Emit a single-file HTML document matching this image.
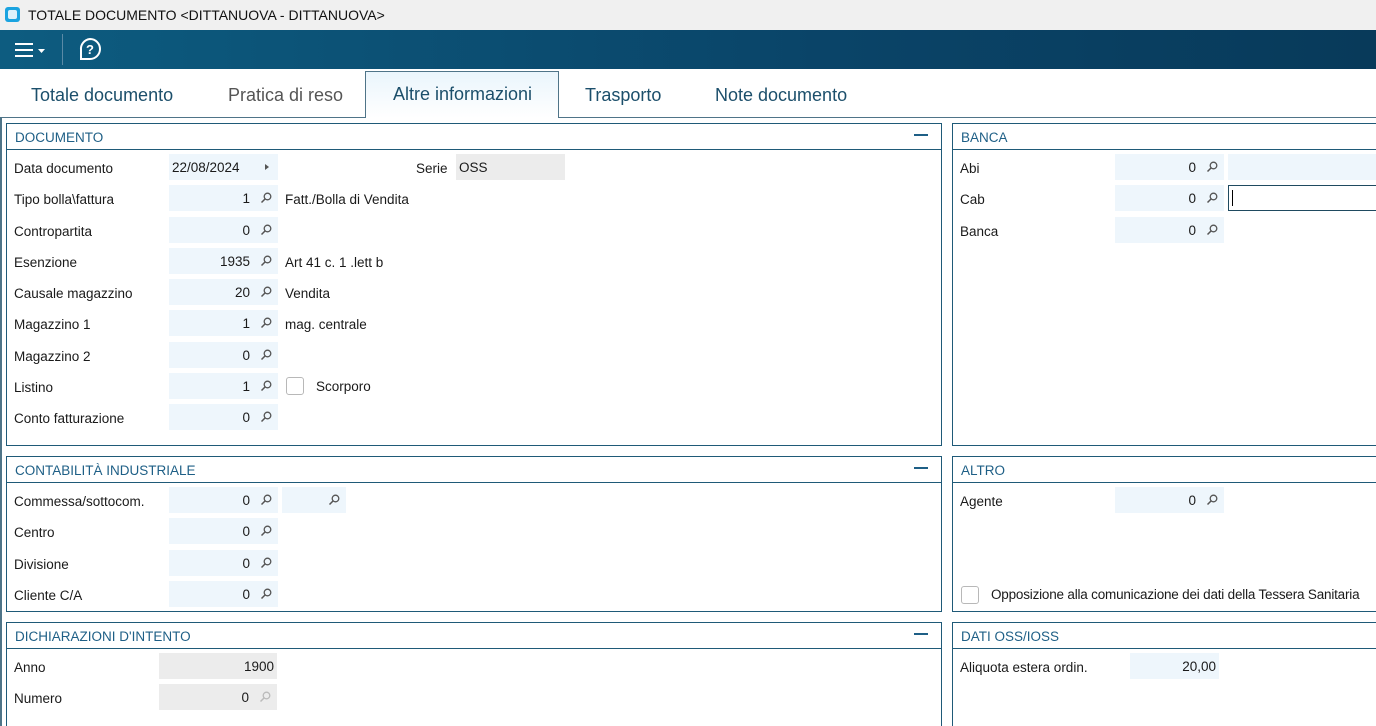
<!DOCTYPE html>
<html style="overflow:hidden;width:1376px;height:726px"><head><meta charset="utf-8"><style>
*{box-sizing:border-box;margin:0;padding:0}
body{width:1376px;height:726px;overflow:hidden;background:#fff;font-family:"Liberation Sans",sans-serif;font-size:13.5px;color:#1a1a1a;position:relative}
.a{position:absolute}
.title{left:0;top:0;width:1376px;height:30px;background:#f0f0f0}
.tb{left:0;top:30px;width:1376px;height:39px;background:linear-gradient(90deg,#0d5c80,#0a4468 60%,#083a5a)}
.tab{top:85px;font-size:18px;color:#1c4f6b}
.panel{border:1px solid #1f5a78;background:#fff}
.ph{position:absolute;left:0;top:0;right:0;height:26px;border-bottom:1px solid #1f5a78;color:#1e5f86;font-size:13.5px;padding:6px 0 0 8px}
.min{position:absolute;top:10px;width:14px;height:1.5px;background:#1e5f86}
.lb{position:absolute;font-size:13.5px;white-space:nowrap}
.in{position:absolute;height:26px;background:#eef6fc;text-align:right;padding:6px 28px 0 0;font-size:13.5px}
.gr{background:#ececec}
.mg{position:absolute;right:6px;top:7px;width:12px;height:12px}
.cb{position:absolute;width:18px;height:18px;border:1px solid #b8b8b8;border-radius:3px;background:#fff}
</style></head><body>
<div class="a title">
 <div class="a" style="left:5px;top:7px;width:15px;height:15px;background:#1aa3e0;border-radius:3px"><div class="a" style="left:3px;top:3px;width:9px;height:9px;background:#fff;border-radius:2px;opacity:.85"></div></div>
 <div class="a" style="left:28px;top:7px;font-size:14px;color:#111">TOTALE DOCUMENTO &lt;DITTANUOVA - DITTANUOVA&gt;</div>
</div>
<div class="a tb">
 <svg class="a" style="left:14px;top:11px" width="36" height="18"><g stroke="#fff" stroke-width="2"><line x1="1" y1="3" x2="19" y2="3"/><line x1="1" y1="9" x2="19" y2="9"/><line x1="1" y1="15" x2="19" y2="15"/></g><path d="M24 8h7l-3.5 4z" fill="#fff"/></svg>
 <div class="a" style="left:62px;top:4px;width:1px;height:31px;background:#5a8aa6"></div>
 <svg class="a" style="left:78px;top:7px" width="26" height="26"><path d="M12 2a10 10 0 1 1 0 20H3v-9A10 10 0 0 1 12 2z" fill="none" stroke="#fff" stroke-width="2"/><text x="12" y="17" font-family="Liberation Sans" font-size="13" font-weight="bold" fill="#fff" text-anchor="middle">?</text></svg>
</div>
<div class="a" style="left:0;top:117px;width:1376px;height:1px;background:#4f7488"></div>
<div class="a" style="left:365px;top:71px;width:194px;height:47px;border:1px solid #4f7488;border-bottom:none;background:linear-gradient(#eaf5fc,#fff)"></div>
<div class="a tab" style="left:31px">Totale documento</div>
<div class="a tab" style="left:228px;color:#555">Pratica di reso</div>
<div class="a tab" style="left:393px;top:84px">Altre informazioni</div>
<div class="a tab" style="left:585px">Trasporto</div>
<div class="a tab" style="left:715px">Note documento</div>
<div class="a" style="left:0;top:117px;width:2px;height:609px;background:#4f7488"></div>

<div class="a panel" style="left:6px;top:123px;width:936px;height:323px"><div class="ph">DOCUMENTO</div><div class="min" style="left:907px"></div></div>
<div class="lb" style="left:14px;top:161px">Data documento</div>
<div class="in" style="left:169px;top:154px;width:109px;text-align:left;padding-left:3px">22/08/2024<svg class="mg" viewBox="0 0 12 12"><path d="M5 3l4 3-4 3z" fill="#555"/></svg></div>
<div class="lb" style="left:416px;top:161px">Serie</div>
<div class="in gr" style="left:456px;top:154px;width:109px;text-align:left;padding-left:3px">OSS</div>

<div class="lb" style="left:14px;top:192px">Tipo bolla\fattura</div>
<div class="in" style="left:169px;top:185px;width:109px">1<svg class="mg"><circle cx="7.5" cy="4.5" r="3.3" fill="none" stroke="#555" stroke-width="1.3"/><line x1="5" y1="7" x2="1.5" y2="10.5" stroke="#555" stroke-width="1.5"/></svg></div>
<div class="lb" style="left:285px;top:192px">Fatt./Bolla di Vendita</div>

<div class="lb" style="left:14px;top:224px">Contropartita</div>
<div class="in" style="left:169px;top:217px;width:109px">0<svg class="mg"><circle cx="7.5" cy="4.5" r="3.3" fill="none" stroke="#555" stroke-width="1.3"/><line x1="5" y1="7" x2="1.5" y2="10.5" stroke="#555" stroke-width="1.5"/></svg></div>

<div class="lb" style="left:14px;top:255px">Esenzione</div>
<div class="in" style="left:169px;top:248px;width:109px">1935<svg class="mg"><circle cx="7.5" cy="4.5" r="3.3" fill="none" stroke="#555" stroke-width="1.3"/><line x1="5" y1="7" x2="1.5" y2="10.5" stroke="#555" stroke-width="1.5"/></svg></div>
<div class="lb" style="left:285px;top:255px">Art 41 c. 1 .lett b</div>

<div class="lb" style="left:14px;top:286px">Causale magazzino</div>
<div class="in" style="left:169px;top:279px;width:109px">20<svg class="mg"><circle cx="7.5" cy="4.5" r="3.3" fill="none" stroke="#555" stroke-width="1.3"/><line x1="5" y1="7" x2="1.5" y2="10.5" stroke="#555" stroke-width="1.5"/></svg></div>
<div class="lb" style="left:285px;top:286px">Vendita</div>

<div class="lb" style="left:14px;top:317px">Magazzino 1</div>
<div class="in" style="left:169px;top:310px;width:109px">1<svg class="mg"><circle cx="7.5" cy="4.5" r="3.3" fill="none" stroke="#555" stroke-width="1.3"/><line x1="5" y1="7" x2="1.5" y2="10.5" stroke="#555" stroke-width="1.5"/></svg></div>
<div class="lb" style="left:285px;top:317px">mag. centrale</div>

<div class="lb" style="left:14px;top:349px">Magazzino 2</div>
<div class="in" style="left:169px;top:342px;width:109px">0<svg class="mg"><circle cx="7.5" cy="4.5" r="3.3" fill="none" stroke="#555" stroke-width="1.3"/><line x1="5" y1="7" x2="1.5" y2="10.5" stroke="#555" stroke-width="1.5"/></svg></div>

<div class="lb" style="left:14px;top:380px">Listino</div>
<div class="in" style="left:169px;top:373px;width:109px">1<svg class="mg"><circle cx="7.5" cy="4.5" r="3.3" fill="none" stroke="#555" stroke-width="1.3"/><line x1="5" y1="7" x2="1.5" y2="10.5" stroke="#555" stroke-width="1.5"/></svg></div>
<div class="cb" style="left:286px;top:377px"></div>
<div class="lb" style="left:316px;top:379px">Scorporo</div>

<div class="lb" style="left:14px;top:411px">Conto fatturazione</div>
<div class="in" style="left:169px;top:404px;width:109px">0<svg class="mg"><circle cx="7.5" cy="4.5" r="3.3" fill="none" stroke="#555" stroke-width="1.3"/><line x1="5" y1="7" x2="1.5" y2="10.5" stroke="#555" stroke-width="1.5"/></svg></div>

<div class="a panel" style="left:952px;top:123px;width:440px;height:323px"><div class="ph">BANCA</div></div>
<div class="lb" style="left:960px;top:161px">Abi</div>
<div class="in" style="left:1115px;top:154px;width:109px">0<svg class="mg"><circle cx="7.5" cy="4.5" r="3.3" fill="none" stroke="#555" stroke-width="1.3"/><line x1="5" y1="7" x2="1.5" y2="10.5" stroke="#555" stroke-width="1.5"/></svg></div>
<div class="in" style="left:1228px;top:154px;width:148px"></div>
<div class="lb" style="left:960px;top:192px">Cab</div>
<div class="in" style="left:1115px;top:185px;width:109px">0<svg class="mg"><circle cx="7.5" cy="4.5" r="3.3" fill="none" stroke="#555" stroke-width="1.3"/><line x1="5" y1="7" x2="1.5" y2="10.5" stroke="#555" stroke-width="1.5"/></svg></div>
<div class="a" style="left:1228px;top:185px;width:150px;height:26px;border:1px solid #1f4a60;background:#fff"><div class="a" style="left:3px;top:4px;width:1px;height:16px;background:#000"></div></div>
<div class="lb" style="left:960px;top:224px">Banca</div>
<div class="in" style="left:1115px;top:217px;width:109px">0<svg class="mg"><circle cx="7.5" cy="4.5" r="3.3" fill="none" stroke="#555" stroke-width="1.3"/><line x1="5" y1="7" x2="1.5" y2="10.5" stroke="#555" stroke-width="1.5"/></svg></div>

<div class="a panel" style="left:6px;top:456px;width:936px;height:156px"><div class="ph">CONTABILITÀ INDUSTRIALE</div><div class="min" style="left:907px"></div></div>
<div class="lb" style="left:14px;top:494px">Commessa/sottocom.</div>
<div class="in" style="left:169px;top:487px;width:109px">0<svg class="mg"><circle cx="7.5" cy="4.5" r="3.3" fill="none" stroke="#555" stroke-width="1.3"/><line x1="5" y1="7" x2="1.5" y2="10.5" stroke="#555" stroke-width="1.5"/></svg></div>
<div class="in" style="left:282px;top:487px;width:64px"><svg class="mg"><circle cx="7.5" cy="4.5" r="3.3" fill="none" stroke="#555" stroke-width="1.3"/><line x1="5" y1="7" x2="1.5" y2="10.5" stroke="#555" stroke-width="1.5"/></svg></div>
<div class="lb" style="left:14px;top:525px">Centro</div>
<div class="in" style="left:169px;top:518px;width:109px">0<svg class="mg"><circle cx="7.5" cy="4.5" r="3.3" fill="none" stroke="#555" stroke-width="1.3"/><line x1="5" y1="7" x2="1.5" y2="10.5" stroke="#555" stroke-width="1.5"/></svg></div>
<div class="lb" style="left:14px;top:557px">Divisione</div>
<div class="in" style="left:169px;top:550px;width:109px">0<svg class="mg"><circle cx="7.5" cy="4.5" r="3.3" fill="none" stroke="#555" stroke-width="1.3"/><line x1="5" y1="7" x2="1.5" y2="10.5" stroke="#555" stroke-width="1.5"/></svg></div>
<div class="lb" style="left:14px;top:588px">Cliente C/A</div>
<div class="in" style="left:169px;top:581px;width:109px">0<svg class="mg"><circle cx="7.5" cy="4.5" r="3.3" fill="none" stroke="#555" stroke-width="1.3"/><line x1="5" y1="7" x2="1.5" y2="10.5" stroke="#555" stroke-width="1.5"/></svg></div>

<div class="a panel" style="left:952px;top:456px;width:440px;height:156px"><div class="ph">ALTRO</div></div>
<div class="lb" style="left:960px;top:494px">Agente</div>
<div class="in" style="left:1115px;top:487px;width:109px">0<svg class="mg"><circle cx="7.5" cy="4.5" r="3.3" fill="none" stroke="#555" stroke-width="1.3"/><line x1="5" y1="7" x2="1.5" y2="10.5" stroke="#555" stroke-width="1.5"/></svg></div>
<div class="cb" style="left:961px;top:586px"></div>
<div class="lb" style="left:991px;top:587px;font-size:13.5px;letter-spacing:-0.2px">Opposizione alla comunicazione dei dati della Tessera Sanitaria</div>

<div class="a panel" style="left:6px;top:622px;width:936px;height:104px;border-bottom:none"><div class="ph">DICHIARAZIONI D'INTENTO</div><div class="min" style="left:907px"></div></div>
<div class="lb" style="left:14px;top:660px">Anno</div>
<div class="in gr" style="left:159px;top:653px;width:118px;padding-right:3px">1900</div>
<div class="lb" style="left:14px;top:691px">Numero</div>
<div class="in gr" style="left:159px;top:684px;width:118px">0<svg class="mg"><circle cx="7.5" cy="4.5" r="3.3" fill="none" stroke="#bbb" stroke-width="1.3"/><line x1="5" y1="7" x2="1.5" y2="10.5" stroke="#bbb" stroke-width="1.5"/></svg></div>

<div class="a panel" style="left:952px;top:622px;width:440px;height:104px;border-bottom:none"><div class="ph">DATI OSS/IOSS</div></div>
<div class="lb" style="left:960px;top:660px">Aliquota estera ordin.</div>
<div class="in" style="left:1130px;top:653px;width:89px;padding-right:3px">20,00</div>
</body></html>
